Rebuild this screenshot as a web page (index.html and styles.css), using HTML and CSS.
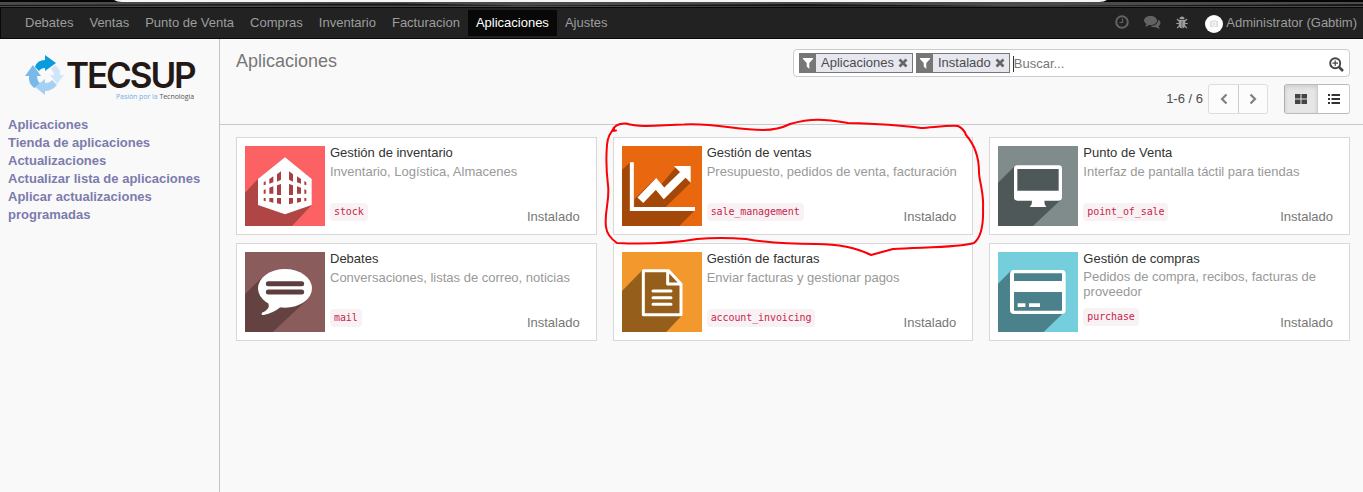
FILE: index.html
```html
<!DOCTYPE html>
<html lang="es">
<head>
<meta charset="utf-8">
<title>Aplicaciones</title>
<link rel="stylesheet" href="styles.css">
</head>
<body>
<svg class="frame" viewBox="0 0 1363 7" preserveAspectRatio="none">
  <rect width="1363" height="7" fill="#4b4b4b"/>
  <path d="M0 0H1363V2H0z" fill="#050505"/>
  <path d="M0 5L400 3.500 520 5.500 800 4 1000 6 1363 4V6L900 6.500 300 5.500 0 6z" fill="#161616"/>
  <path d="M114 0H1107Q1104 2 1099 2H122Q117 2 114 0z" fill="#f4f5f6"/>
</svg>
<header class="navbar">
  <nav class="menu">
    <a>Debates</a><a>Ventas</a><a>Punto de Venta</a><a>Compras</a><a>Inventario</a><a>Facturacion</a><a class="active">Aplicaciones</a><a>Ajustes</a>
  </nav>
  <div class="systray">
    <svg class="clock" width="14" height="14" viewBox="0 0 14 14" fill="none" stroke="#636363"><circle cx="7" cy="7" r="5.800" stroke-width="2"/><path d="M7.500 3.500V7.500H4.500" stroke-width="1.200"/></svg>
    <svg class="chat" width="17" height="13" viewBox="0 0 17 13" fill="#636363"><path d="M6.500 0C10 0 13 2 13 4.500S10 9 6.500 9L5 8.900Q3.500 10.400 1.200 10.500L2.500 8Q0 6.500 0 4.500C0 2 3 0 6.500 0z"/><path d="M14.200 3.500Q16.500 5 16.500 7T14.500 10.200L15.800 12.700Q13.500 12.500 12 11.200Q8.500 11.700 6.300 10Q14 9.700 14.200 3.500z"/></svg>
    <svg class="bug" width="12" height="13" viewBox="0 0 12 13"><path d="M3.500 3.200Q3.500 .5 6 .5T8.500 3.200zM2.800 4H9.200V9Q9 12.300 6 12.300T2.800 9z" fill="#9d9d9d"/><path d="M3 5L1 3M9 5L11 3M3 7.500H.3M9 7.500H11.700M3.200 9.800L1.200 12M8.800 9.800L10.800 12" stroke="#9d9d9d" stroke-width="1.200"/><path d="M6 5V12" stroke="#444" stroke-width=".7"/></svg>
    <svg class="avatar" width="18" height="18" viewBox="0 0 18 18"><circle cx="9" cy="9" r="9" fill="#fff"/><path d="M5 6H7L8 5.200H10.500L11.300 6H13V12H5z" fill="#dedede"/><circle cx="9" cy="9" r="2" fill="#dedede" stroke="#fff"/></svg>
    <span>Administrator (Gabtim)</span>
  </div>
</header>
<div class="body">
  <aside class="sidebar">
    <div class="logo">
      <svg width="40" height="42" viewBox="0 0 40 42">
        <path d="M10 13Q12 6 20 6V1L31 9 20 17V14Q16 14 14 17z" fill="#099bde"/>
        <path d="M8 11L16 22H12Q12 27 16 30L9 34Q3 29 4 22H0z" fill="#79b9ea"/>
        <path d="M10 33L20 25V29Q25 29 27 26L32 31Q27 37 20 37V41z" fill="#a4d0f3"/>
        <path d="M30 11Q36 15 35 21H39L32 30 25 21H29Q29 18 26 15z" fill="#cfe6fa"/>
      </svg>
      <div class="wordmark"><span class="logo-name">TECSUP</span><span class="logo-tag"><b>Pasión por la</b> Tecnología</span></div>
    </div>
    <ul class="side-menu"><li>Aplicaciones</li><li>Tienda de aplicaciones</li><li>Actualizaciones</li><li>Actualizar lista de aplicaciones</li><li>Aplicar actualizaciones programadas</li></ul>
  </aside>
  <main class="main">
    <div class="control">
      <h1>Aplicaciones</h1>
      <div class="tools">
        <div class="search">
          <div class="facet"><span class="funnel"><svg width="10" height="11" viewBox="0 0 10 11"><path d="M0 0H10V1L6.300 5V11L3.700 8.500V5L0 1z" fill="#fff"/></svg></span><span class="facet-text">Aplicaciones</span><svg class="remove" width="10" height="10" viewBox="0 0 10 10"><path d="M1.500 1.500L8.500 8.500M8.500 1.500L1.500 8.500" stroke="#666" stroke-width="2.700"/></svg></div>
          <div class="facet"><span class="funnel"><svg width="10" height="11" viewBox="0 0 10 11"><path d="M0 0H10V1L6.300 5V11L3.700 8.500V5L0 1z" fill="#fff"/></svg></span><span class="facet-text">Instalado</span><svg class="remove" width="10" height="10" viewBox="0 0 10 10"><path d="M1.500 1.500L8.500 8.500M8.500 1.500L1.500 8.500" stroke="#666" stroke-width="2.700"/></svg></div>
          <span class="query">Buscar...</span>
          <svg class="magnifier" width="15" height="15" viewBox="0 0 15 15" fill="none" stroke="#444"><circle cx="6.200" cy="6.200" r="5" stroke-width="1.900"/><path d="M3.500 6.200H9M6.200 3.500V9" stroke-width="1.200"/><path d="M10 10L14 14" stroke-width="2.500"/></svg>
        </div>
        <div class="paging">
          <span class="count">1-6 / 6</span>
          <div class="group pager"><button><svg width="8" height="12" viewBox="0 0 8 12"><path d="M6.500 1.500L2 6L6.500 10.500" fill="none" stroke="#808080" stroke-width="2.200"/></svg></button><button><svg width="8" height="12" viewBox="0 0 8 12"><path d="M1.500 1.500L6 6L1.500 10.500" fill="none" stroke="#808080" stroke-width="2.200"/></svg></button></div>
          <div class="group views"><button class="pressed"><svg width="12" height="10" viewBox="0 0 12 10"><path d="M0 0H5.500V4.500H0zM6.500 0H12V4.500H6.500zM0 5.500H5.500V10H0zM6.500 5.500H12V10H6.500z" fill="#444"/></svg></button><button><svg width="12" height="10" viewBox="0 0 12 10"><path d="M0 0H2V2H0zM0 4H2V6H0zM0 8H2V10H0zM3.500 0H12V2H3.500zM3.500 4H12V6H3.500zM3.500 8H12V10H3.500z" fill="#333"/></svg></button></div>
        </div>
      </div>
    </div>
    <section class="cards">
      <article class="card">
        <svg class="app-icon" viewBox="0 0 240 240"><path fill="#fc6263" d="M0 0H240V240H0z"/><path fill="#b04546" d="M39 99L0 140V240H141L200 177z"/><path fill="#fff" d="M120 34L200 99V177L120 205L39 177V99z"/><path fill="#a83f42" d="M56 109L62 105V116L56 118zM73 99L85 91V109L73 113zM96 85L108 76V101L96 107zM132 76L144 85V107L132 101zM156 91L168 99V113L156 109zM178 105L184 109V118L178 116zM56 132L62 130V143H56zM73 125L85 121V143H73zM96 118L108 114V147H96zM132 114L144 118V147H132zM156 121L168 125V143H156zM178 130L184 132V143H178zM56 156H62V166L56 164zM73 156H85V170L73 167zM96 156H108V175L96 172zM132 156H144V172L132 175zM156 156H168V167L156 170zM178 156H184V164L178 166z"/></svg>
        <div class="details"><h2>Gestión de inventario</h2><p>Inventario, Logística, Almacenes</p><div class="foot"><code>stock</code><span>Instalado</span></div></div>
      </article>
      <article class="card">
        <svg class="app-icon" viewBox="0 0 240 240"><path fill="#e9680f" d="M0 0H240V240H0z"/><path fill="#a44809" d="M24 49L0 72V240H172L219 193H24z"/><path fill="#e9680f" d="M35 49H219V183H35z"/><path fill="#a44809" d="M99 98L37 160V183H131L206 110L160 65L118 115z"/><path d="M29.500 49V189H219" fill="none" stroke="#fff" stroke-width="12"/><path d="M55 163L102 114L126 142L185 84" fill="none" stroke="#fff" stroke-width="24"/><path fill="#fff" d="M156 60H206V110z"/></svg>
        <div class="details"><h2>Gestión de ventas</h2><p>Presupuesto, pedidos de venta, facturación</p><div class="foot"><code>sale_management</code><span>Instalado</span></div></div>
      </article>
      <article class="card">
        <svg class="app-icon" viewBox="0 0 240 240"><path fill="#7f8c8b" d="M0 0H240V240H0z"/><path fill="#4f5858" d="M50 61L0 110V240H105L190 160z"/><rect x="48" y="58" width="144" height="106" rx="10" fill="#fff"/><path fill="#4f5858" d="M58 69H182V134H58z"/><path fill="#fff" d="M102 162H139L140 175L145 183H95L101 175z"/></svg>
        <div class="details"><h2>Punto de Venta</h2><p>Interfaz de pantalla táctil para tiendas</p><div class="foot"><code>point_of_sale</code><span>Instalado</span></div></div>
      </article>
      <article class="card">
        <svg class="app-icon" viewBox="0 0 240 240"><path fill="#8a5c5b" d="M0 0H240V240H0z"/><path fill="#634241" d="M50 77L0 126V240H83L185 145z"/><ellipse cx="120" cy="109" rx="81" ry="58" fill="#fff"/><path fill="#fff" d="M66 144Q74 158 70 168Q63 178 51 182Q47 189 56 189Q85 183 107 165z"/><path d="M70 95H170M70 120H170" stroke="#5d3d3d" stroke-width="15" stroke-linecap="round"/></svg>
        <div class="details"><h2>Debates</h2><p>Conversaciones, listas de correo, noticias</p><div class="foot"><code>mail</code><span>Instalado</span></div></div>
      </article>
      <article class="card">
        <svg class="app-icon" viewBox="0 0 240 240"><path fill="#f2982c" d="M0 0H240V240H0z"/><path fill="#955e1b" d="M61 55L0 117V240H133L178 192V96L137 56z"/><path d="M64 56H140L177 96V188H64zM137 56V96H177" fill="none" stroke="#fff" stroke-width="9" stroke-linejoin="round"/><path d="M93 117H147M93 137H147M93 157H147" stroke="#fff" stroke-width="9" stroke-linecap="round"/></svg>
        <div class="details"><h2>Gestión de facturas</h2><p>Enviar facturas y gestionar pagos</p><div class="foot"><code>account_invoicing</code><span>Instalado</span></div></div>
      </article>
      <article class="card">
        <svg class="app-icon" viewBox="0 0 240 240"><path fill="#75cedb" d="M0 0H240V240H0z"/><path fill="#4b818a" d="M38 57L0 95V240H137L195 184z"/><rect x="36" y="54" width="167" height="132" rx="12" fill="#fff"/><path fill="#4b818a" d="M48 64H192V87H48zM48 120H192V176H48z"/><path fill="#fff" d="M59 154H82V165H59zM93 154H126V165H93z"/></svg>
        <div class="details two-line"><h2>Gestión de compras</h2><p>Pedidos de compra, recibos, facturas de proveedor</p><div class="foot"><code>purchase</code><span>Instalado</span></div></div>
      </article>
    </section>
  </main>
</div>
<svg class="annotation" viewBox="0 0 400 145"><path d="M16 15.500L12 16Q15 8 26 8.500C42 13 60 10 84 9.500C116 8 136 15 163 15Q178 15 190 9C211 3 224 4 248 8Q292 9 321 13C336 12 350 10 358 11Q364 14 366 20C373 28 379 40 379 57C379 66 384 77 383 93Q384 120 374 128C358 133 318 132 293 134L271 140C257 133 240 129 216 129C190 129 168 128 146 124Q120 122 97 124Q62 130 17 128Q7 121 6 112C4 97 10 86 8 70C6 54 6 42 7 30Q8 19 14 14" fill="none" stroke="#fb0007" stroke-width="2" stroke-linecap="round" stroke-linejoin="round"/></svg>
</body>
</html>
```
FILE: styles.css
```css
* { box-sizing: border-box; }
body { margin: 0; width: 1363px; height: 492px; overflow: hidden; background: #f9f9f9; font: 13px/18px "Liberation Sans", Arial, sans-serif; color: #4c4c4c; position: relative; }
svg { display: block; flex: none; }
.frame { width: 1363px; height: 7px; }
.navbar { height: 32px; background: #222; border: 1px solid #080808; border-width: 1px 0 1px 1px; display: flex; justify-content: space-between; }
.menu { display: flex; padding: 2px 0 2px 16px; color: #9d9d9d; }
.menu a { padding: 3px 8px 0; line-height: 20px; height: 26px; white-space: nowrap; }
.menu .active { background: #080808; color: #fff; }
.systray { display: flex; align-items: center; color: #9d9d9d; padding-right: 6px; }
.systray span { padding-left: 3px; white-space: nowrap; }
.clock { margin: 0 15px 2px 0; }
.chat { margin: 0 15px 1px 0; }
.bug { margin: 0 17px 1px 0; }
.avatar { margin-top: 2px; }
.body { display: flex; height: 453px; }
.sidebar { width: 220px; border-right: 1px solid #c4c4c4; flex: none; }
.logo { display: flex; height: 50px; margin: 14px 0 0 25px; padding-top: 1px; }
.wordmark { display: flex; flex-direction: column; width: 130px; padding-left: 1px; }
.logo-name { height: 35px; font: 600 35px/42px "Inter", sans-serif; letter-spacing: -2.1px; color: #231815; white-space: nowrap; }
.logo-tag { font: 7px/10px "Open Sans", sans-serif; letter-spacing: -.05px; color: #555; text-align: right; padding: 3px 1px 0 0; white-space: nowrap; }
.logo-tag b { font-weight: normal; color: #71aee5; }
.side-menu { list-style: none; margin: 13px 0 0; padding: 0 12px 0 8px; font-weight: bold; color: #7c7bad; }
.main { flex: 1; min-width: 0; }
.control { height: 86px; border-bottom: 1px solid #c8c8c8; padding: 10px 13px 0 16px; display: flex; justify-content: space-between; }
.control h1 { margin: 0; font-size: 18px; line-height: 24px; font-weight: normal; color: #777; }
.tools { width: 557px; }
.search { height: 28px; border: 1px solid #ccc; border-radius: 4px; background: #fff; display: flex; align-items: center; padding: 0 5px; }
.facet { height: 20px; border: 1px solid #777; background: #e7e7f0; display: flex; align-items: center; margin-right: 3px; }
.funnel { width: 16px; height: 18px; background: #777; display: flex; align-items: center; justify-content: center; }
.facet-text { padding: 0 4px 0 5px; }
.remove { margin-right: 4px; }
.query { border-left: 1px solid #333; line-height: 16px; color: #777; flex: 1; margin-top: 1px; }
.magnifier { margin-top: 2px; }
.paging { display: flex; justify-content: flex-end; align-items: center; margin-top: 7px; }
.count { margin-right: 5px; }
.group { display: flex; border: 1px solid #ccc; border-radius: 3px; height: 30px; overflow: hidden; background: #fff; }
.group button { display: flex; align-items: center; justify-content: center; border: 0; background: none; padding: 0; width: 32px; }
.group button + button { border-left: 1px solid #ccc; }
.pager { width: 60px; border-color: #ddd; margin-right: 16px; background: #fcfcfc; }
.pager button { width: 29px; }
.views { width: 66px; border-color: #bbb #ccc #bbb #adadad; }
.views .pressed { background: #e6e6e6; box-shadow: inset 0 2px 4px #ccc; }
.cards { display: grid; grid-template-columns: repeat(3, 1fr); grid-auto-rows: 98px; gap: 8px 16px; padding: 12px 13px 0 16px; }
.card { border: 1px solid #d8d8d8; background: #fff; display: flex; padding: 8px; }
.app-icon { width: 80px; height: 80px; }
.details { flex: 1; min-width: 0; display: flex; flex-direction: column; padding-left: 5px; }
.details h2 { margin: -2px 0 0; font-size: 13px; line-height: 18px; font-weight: normal; color: #333; }
.details p { margin: 0; padding-top: 2px; line-height: 15px; color: #999; }
.foot { margin-top: auto; height: 28px; display: flex; justify-content: space-between; align-items: flex-start; }
code { font: 10px/18px "DejaVu Sans Mono", monospace; letter-spacing: -.09px; color: #c7254e; background: #f9f2f4; border-radius: 4px; padding: 0 4px; margin-top: 5px; }
.foot span { color: #777; line-height: 18px; padding-right: 8px; margin-top: 10px; }
.two-line p { padding-top: 1px; }
.two-line code { margin-top: 4px; }
.annotation { position: absolute; left: 600px; top: 115px; width: 400px; height: 145px; pointer-events: none; }
```
